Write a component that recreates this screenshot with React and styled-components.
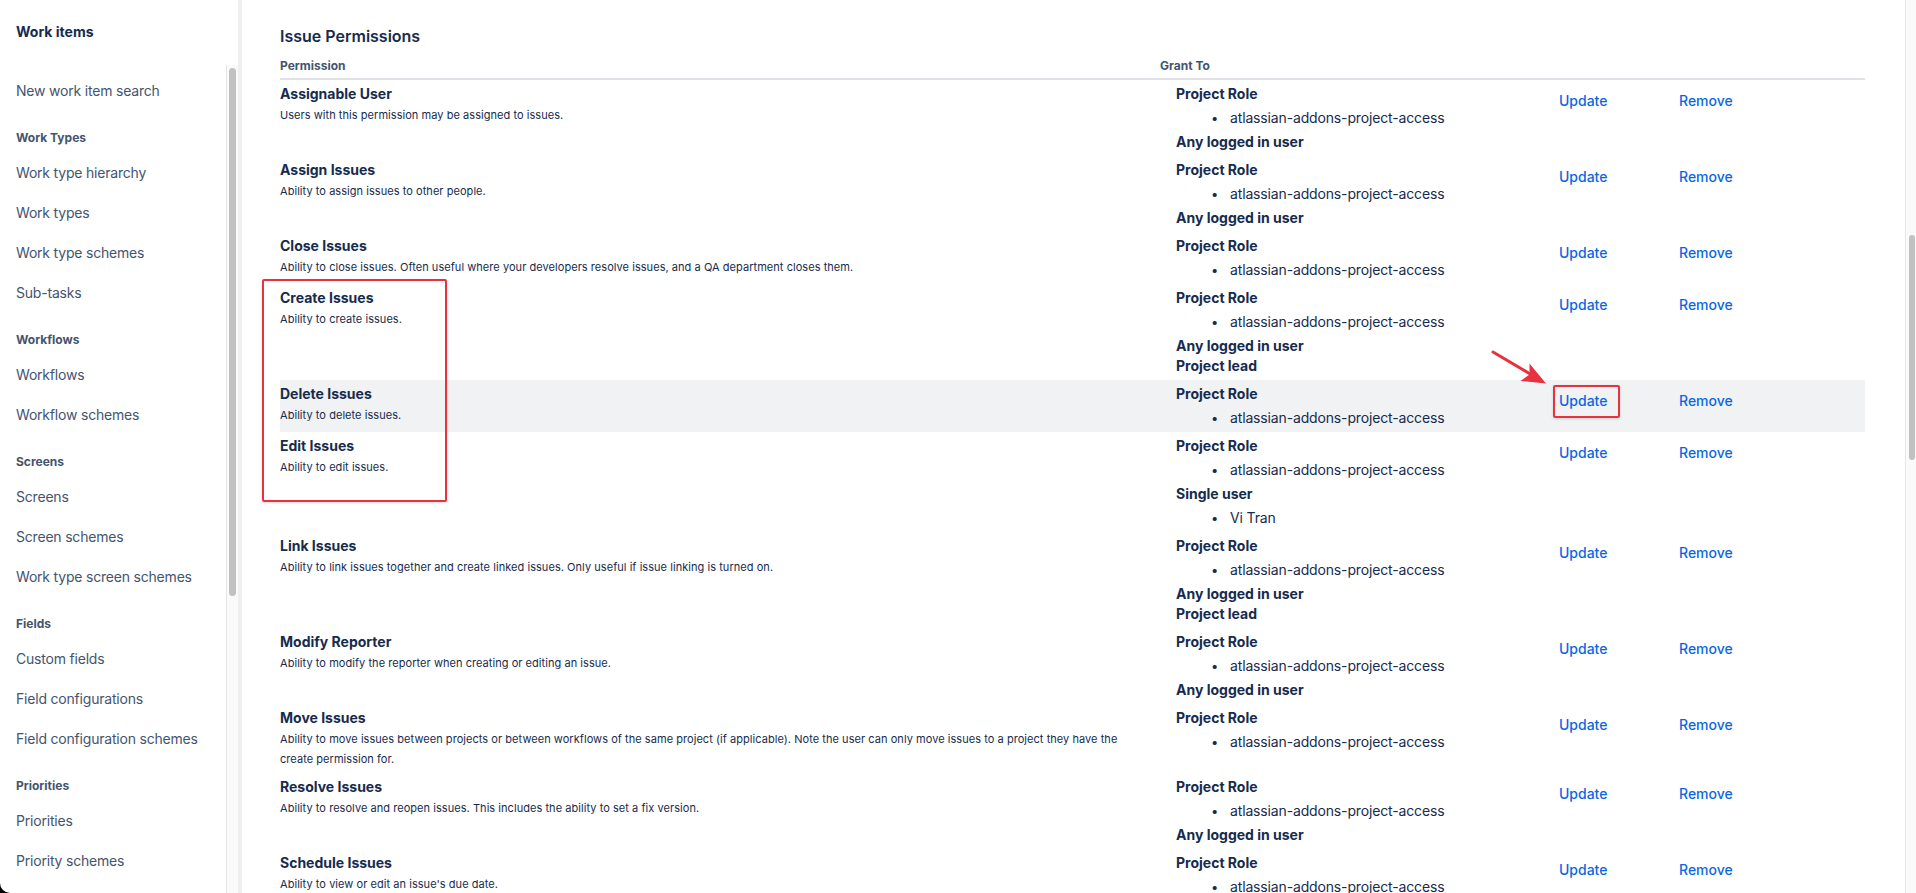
import React from "react";
import styled, { createGlobalStyle } from "styled-components";

const GlobalStyle = createGlobalStyle`
  html, body {
    margin: 0;
    padding: 0;
    background: #000;
  }
  body {
    font-family: Inter, "Noto Sans", sans-serif;
    color: #172b4d;
    -webkit-font-smoothing: antialiased;
  }
  * {
    box-sizing: border-box;
  }
`;

const Page = styled.div`
  position: relative;
  display: flex;
  height: 100vh;
  background: #fff;
  overflow: hidden;
  border-bottom-left-radius: 10px;
`;

/* ---------- sidebar ---------- */

const Sidebar = styled.aside`
  width: 242px;
  flex-shrink: 0;
  display: flex;
  flex-direction: column;
  border-right: 4px solid #efefef;
`;

const SidebarTitle = styled.div`
  height: 65px;
  padding: 22px 0 0 16px;
  font-size: 14px;
  line-height: 20px;
  font-weight: 700;
  color: #172b4d;
`;

const SidebarScroll = styled.div`
  flex: 1;
  min-height: 0;
  display: flex;
`;

const NavList = styled.nav`
  flex: 1;
  padding-top: 6px;
  overflow: hidden;
`;

const NavItem = styled.a`
  display: block;
  padding: 10px 16px;
  font-size: 14px;
  line-height: 20px;
  letter-spacing: -0.2px;
  color: #44546f;
  text-decoration: none;
  white-space: nowrap;
`;

const NavHeading = styled.div`
  padding: 19px 16px 7px;
  font-size: 12px;
  line-height: 16px;
  font-weight: 700;
  color: #44546f;
`;

const ScrollTrack = styled.div`
  width: ${(p) => p.$width}px;
  flex-shrink: 0;
  background: #fafafa;
  border-left: 1px solid #e6e6e6;
  padding-left: ${(p) => p.$inset}px;
`;

const ScrollThumb = styled.div`
  width: ${(p) => p.$width}px;
  height: ${(p) => p.$height}px;
  margin-top: ${(p) => p.$top}px;
  background: #c1c1c1;
  border-radius: 4px;
`;

/* ---------- main ---------- */

const Main = styled.main`
  flex: 1;
  min-width: 0;
  display: flex;
`;

const Content = styled.div`
  flex: 1;
  min-width: 0;
  padding: 24px 40px 0 38px;
  overflow: hidden;
`;

const Heading = styled.h2`
  margin: 0;
  font-size: 16px;
  line-height: 24px;
  font-weight: 600;
  color: #172b4d;
`;

const Row = styled.div`
  display: grid;
  grid-template-columns: 880px 399px 120px 1fr;
  background: ${(p) => (p.$highlight ? "#f1f2f4" : "transparent")};
`;

const HeadRow = styled(Row)`
  border-bottom: 2px solid #dfe1e6;
`;

const HeadCell = styled.div`
  padding: 10px 0 4px;
  font-size: 12px;
  line-height: 16px;
  font-weight: 700;
  color: #44546f;
`;

const PermissionCell = styled.div`
  padding: 4px 24px 4px 0;
`;

const Title = styled.div`
  font-size: 14px;
  line-height: 20px;
  font-weight: 700;
  color: #172b4d;
`;

const Description = styled.div`
  margin-top: 1px;
  font-size: 11px;
  line-height: 20px;
  letter-spacing: 0.05px;
  color: #172b4d;
`;

const GrantCell = styled.div`
  padding: 4px 0 4px 16px;
`;

const GrantLabel = styled.div`
  font-size: 14px;
  line-height: 20px;
  font-weight: 700;
  color: #172b4d;
`;

const GrantList = styled.ul`
  margin: 4px 0;
  padding-left: 54px;
  list-style: none;

  &:last-child {
    margin-bottom: 0;
  }

  li {
    font-size: 14px;
    line-height: 20px;
    letter-spacing: -0.15px;
    color: #172b4d;
  }

  li::before {
    content: "•";
    display: inline-block;
    width: 19px;
    margin-left: -19px;
    font-size: 13px;
  }
`;

const ActionCell = styled.div`
  padding-top: 10px;
`;

const ActionLink = styled.a`
  font-size: 14px;
  line-height: 20px;
  font-weight: 500;
  color: #0c66e4;
  text-decoration: none;
  cursor: pointer;
`;

/* ---------- annotations ---------- */

const Marker = styled.div`
  position: absolute;
  left: ${(p) => p.$x}px;
  top: ${(p) => p.$y}px;
  width: ${(p) => p.$w}px;
  height: ${(p) => p.$h}px;
  border: 2.5px solid #e8323f;
  border-radius: 2px;
  box-shadow: 0 1px 3px rgba(0, 0, 0, 0.15);
  pointer-events: none;
`;

const ArrowWrap = styled.svg`
  position: absolute;
  left: 1485px;
  top: 345px;
  pointer-events: none;
`;

const nav = [
  { items: ["New work item search"] },
  { heading: "Work Types", items: ["Work type hierarchy", "Work types", "Work type schemes", "Sub-tasks"] },
  { heading: "Workflows", items: ["Workflows", "Workflow schemes"] },
  { heading: "Screens", items: ["Screens", "Screen schemes", "Work type screen schemes"] },
  { heading: "Fields", items: ["Custom fields", "Field configurations", "Field configuration schemes"] },
  { heading: "Priorities", items: ["Priorities", "Priority schemes"] },
];

const ROLE = { label: "Project Role", items: ["atlassian-addons-project-access"] };
const ANY = { label: "Any logged in user" };
const LEAD = { label: "Project lead" };

const permissions = [
  {
    title: "Assignable User",
    desc: "Users with this permission may be assigned to issues.",
    grants: [ROLE, ANY],
  },
  {
    title: "Assign Issues",
    desc: "Ability to assign issues to other people.",
    grants: [ROLE, ANY],
  },
  {
    title: "Close Issues",
    desc: "Ability to close issues. Often useful where your developers resolve issues, and a QA department closes them.",
    grants: [ROLE],
  },
  {
    title: "Create Issues",
    desc: "Ability to create issues.",
    grants: [ROLE, ANY, LEAD],
  },
  {
    title: "Delete Issues",
    desc: "Ability to delete issues.",
    grants: [ROLE],
    highlight: true,
  },
  {
    title: "Edit Issues",
    desc: "Ability to edit issues.",
    grants: [ROLE, { label: "Single user", items: ["Vi Tran"] }],
  },
  {
    title: "Link Issues",
    desc: "Ability to link issues together and create linked issues. Only useful if issue linking is turned on.",
    grants: [ROLE, ANY, LEAD],
  },
  {
    title: "Modify Reporter",
    desc: "Ability to modify the reporter when creating or editing an issue.",
    grants: [ROLE, ANY],
  },
  {
    title: "Move Issues",
    desc: "Ability to move issues between projects or between workflows of the same project (if applicable). Note the user can only move issues to a project they have the create permission for.",
    grants: [ROLE],
  },
  {
    title: "Resolve Issues",
    desc: "Ability to resolve and reopen issues. This includes the ability to set a fix version.",
    grants: [ROLE, ANY],
  },
  {
    title: "Schedule Issues",
    desc: "Ability to view or edit an issue's due date.",
    grants: [ROLE, ANY],
  },
];

const App = () => {
  return (
    <>
      <GlobalStyle />
      <Page>
        <Sidebar>
          <SidebarTitle>Work items</SidebarTitle>
          <SidebarScroll>
            <NavList>
              {nav.map((group, i) => (
                <React.Fragment key={i}>
                  {group.heading && <NavHeading>{group.heading}</NavHeading>}
                  {group.items.map((item) => (
                    <NavItem key={item}>{item}</NavItem>
                  ))}
                </React.Fragment>
              ))}
            </NavList>
            <ScrollTrack $width={12} $inset={2}>
              <ScrollThumb $width={7} $top={3} $height={528} />
            </ScrollTrack>
          </SidebarScroll>
        </Sidebar>

        <Main>
          <Content>
            <Heading>Issue Permissions</Heading>
            <HeadRow>
              <HeadCell>Permission</HeadCell>
              <HeadCell>Grant To</HeadCell>
              <HeadCell />
              <HeadCell />
            </HeadRow>
            {permissions.map((p) => (
              <Row key={p.title} $highlight={p.highlight}>
                <PermissionCell>
                  <Title>{p.title}</Title>
                  <Description>{p.desc}</Description>
                </PermissionCell>
                <GrantCell>
                  {p.grants.map((g, i) => (
                    <React.Fragment key={i}>
                      <GrantLabel>{g.label}</GrantLabel>
                      {g.items && (
                        <GrantList>
                          {g.items.map((it) => (
                            <li key={it}>{it}</li>
                          ))}
                        </GrantList>
                      )}
                    </React.Fragment>
                  ))}
                </GrantCell>
                <ActionCell>
                  <ActionLink>Update</ActionLink>
                </ActionCell>
                <ActionCell>
                  <ActionLink>Remove</ActionLink>
                </ActionCell>
              </Row>
            ))}
          </Content>
          <ScrollTrack $width={11} $inset={3}>
            <ScrollThumb $width={6} $top={235} $height={225} />
          </ScrollTrack>
        </Main>

        <Marker $x={262} $y={279} $w={185} $h={223} />
        <Marker $x={1553} $y={385} $w={67} $h={33} />
        <ArrowWrap width="70" height="45" viewBox="0 0 70 45">
          <line x1="8" y1="7" x2="46" y2="29.5" stroke="#e8323f" strokeWidth="3" strokeLinecap="round" />
          <polygon points="61,38.5 35.5,36 44.5,29.5 44.5,18.5" fill="#e8323f" />
        </ArrowWrap>
      </Page>
    </>
  );
};

export default App;
